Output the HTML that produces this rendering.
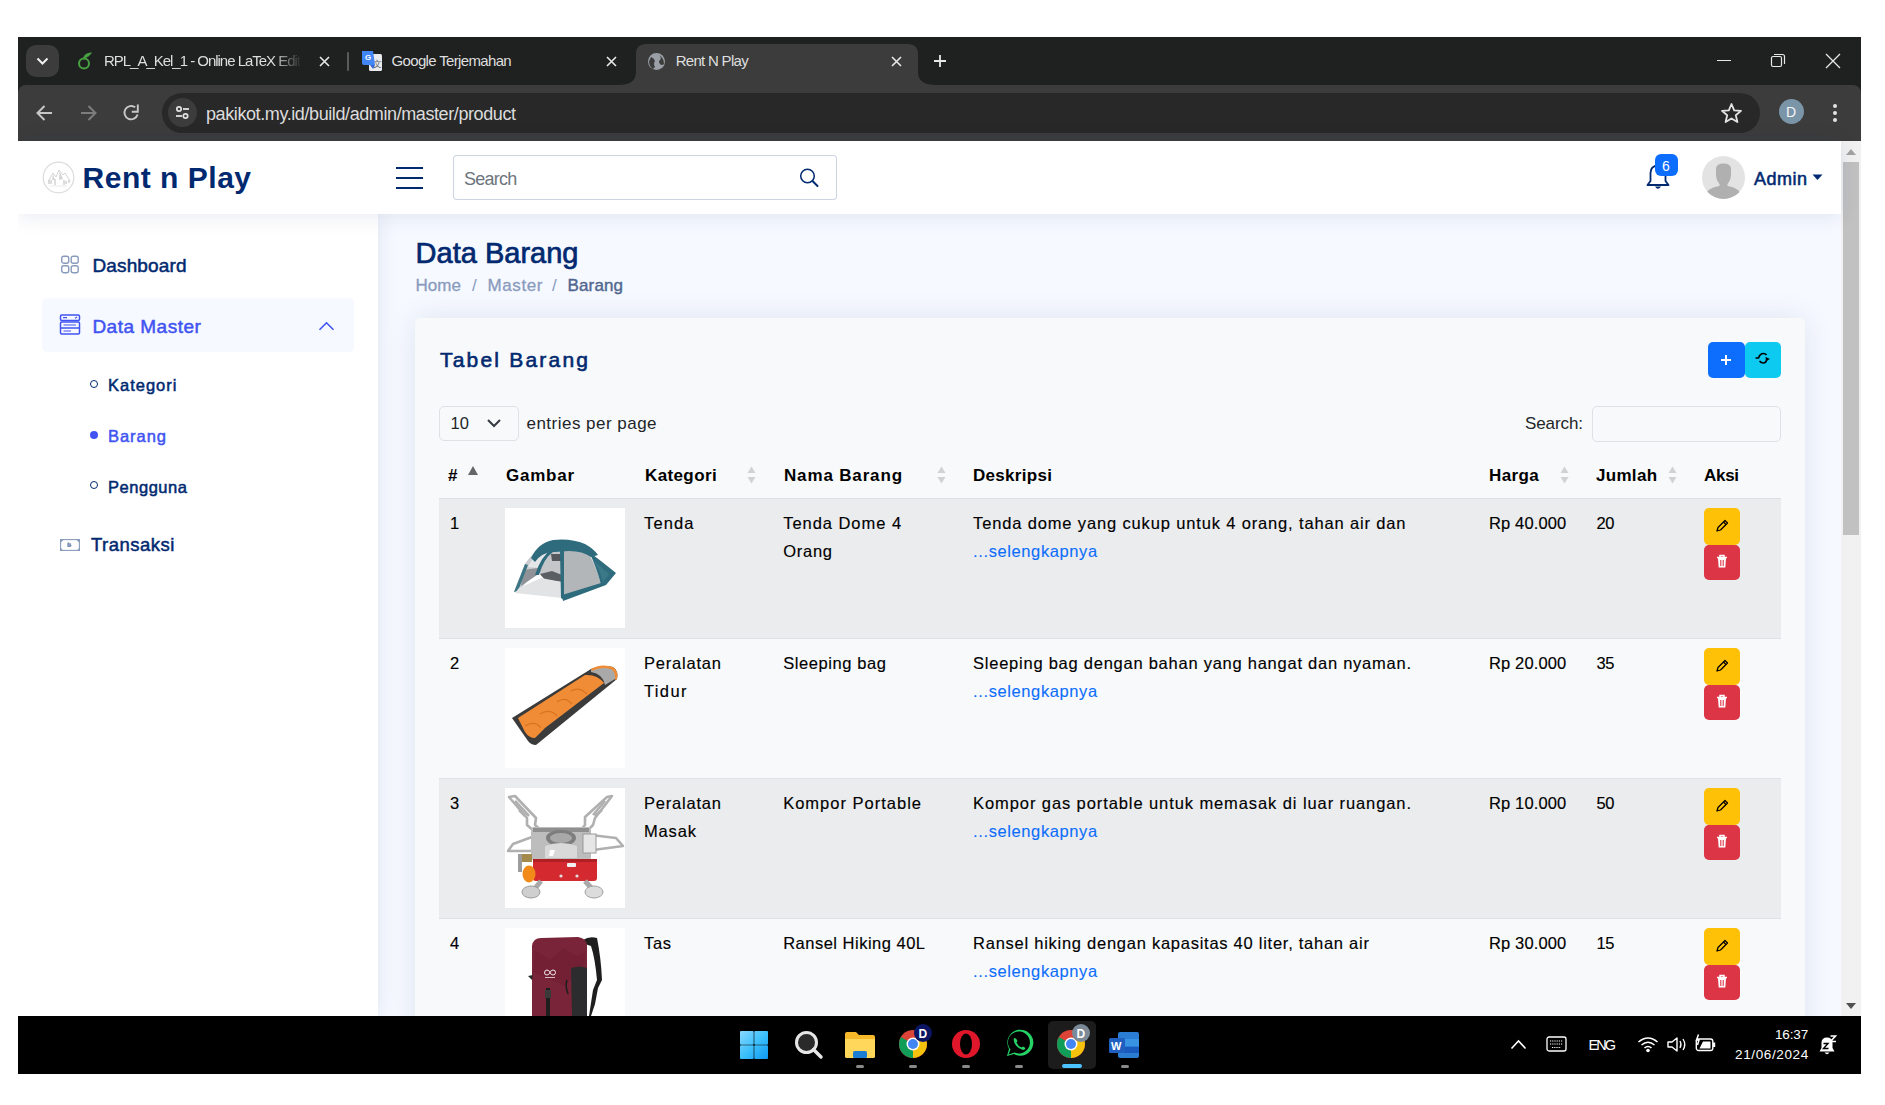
<!DOCTYPE html><html><head><meta charset="utf-8"><style>
html,body{margin:0;padding:0}
body{width:1885px;height:1105px;background:#fff;position:relative;overflow:hidden;font-family:"Liberation Sans",sans-serif}
.a{position:absolute}
.t{position:absolute;white-space:nowrap;line-height:1}
</style></head><body>
<div class="a" style="left:18px;top:37px;width:1843px;height:104px;background:#1f2020"></div>
<div class="a" style="left:18px;top:85px;width:1843px;height:56px;background:#3c3c3c;border-radius:8px 8px 0 0"></div>
<div class="a" style="left:26px;top:45px;width:33px;height:32px;background:#3c3c3c;border-radius:10px"></div>
<svg class="a" style="left:36px;top:57px;" width="13" height="8" viewBox="0 0 13 8"><path d="M1.5 1.5 L6.5 6.5 L11.5 1.5" stroke="#f0f0f0" stroke-width="2" fill="none"/></svg>
<svg class="a" style="left:77px;top:51px;" width="16" height="19" viewBox="0 0 16 19"><circle cx="7" cy="12.5" r="5" stroke="#47a141" stroke-width="2" fill="none"/><path d="M6 7.5 C7 3 11 1.5 15 1.5 C13 5 10 6.5 7 7.5Z" fill="#47a141"/></svg>
<div class="t " style="left:104.00px;top:53.05px;font-size:15px;font-weight:normal;color:#dedede;letter-spacing:-1.021px;width:200px;overflow:hidden;padding-bottom:5px;-webkit-mask-image:linear-gradient(90deg,#000 84%,transparent 99%);">RPL_A_Kel_1 - Online LaTeX Edit</div>
<svg class="a" style="left:318px;top:55px;" width="13" height="13" viewBox="0 0 13 13"><path d="M2 2 L11 11 M11 2 L2 11" stroke="#e8e8e8" stroke-width="1.6"/></svg>
<div class="a" style="left:347px;top:52px;width:2px;height:19px;background:#5a5a5a;border-radius:1px"></div>
<svg class="a" style="left:361px;top:50px;" width="22" height="22" viewBox="0 0 22 22"><rect x="8" y="4" width="13" height="17" rx="1.5" fill="#e8eaed"/><text x="12" y="17" font-size="9" fill="#5f6368" font-family="Liberation Sans">文</text><path d="M1 1 H12 L14 15 H3 Q1 15 1 13Z" fill="#4285f4"/><text x="4" y="10" font-size="8" fill="#fff" font-weight="bold" font-family="Liberation Sans">G</text><path d="M9 15 L14 15 L12 19Z" fill="#3367d6"/></svg>
<div class="t " style="left:391.50px;top:53.05px;font-size:15px;font-weight:normal;color:#dedede;letter-spacing:-0.653px;">Google Terjemahan</div>
<svg class="a" style="left:605px;top:55px;" width="13" height="13" viewBox="0 0 13 13"><path d="M2 2 L11 11 M11 2 L2 11" stroke="#e8e8e8" stroke-width="1.6"/></svg>
<svg class="a" style="left:618px;top:44px" width="318" height="41" viewBox="0 0 318 41"><path d="M0 41 Q18 41 18 28 V10 Q18 0 28 0 H290 Q300 0 300 10 V28 Q300 41 318 41 Z" fill="#3c3c3c"/></svg>
<svg class="a" style="left:647px;top:52px;" width="19" height="19" viewBox="0 0 19 19"><circle cx="9.5" cy="9.5" r="8.5" fill="#9aa0a6"/><path d="M4 5 Q7 6 8 9 Q6 12 8 15 L6 17 Q2 14 2 9.5Z M12 3 Q15 6 13 8 Q11 9 13 12 Q15 14 17 12 Q17 6 12 3Z" fill="#3c3c3c"/></svg>
<div class="t " style="left:675.70px;top:53.05px;font-size:15px;font-weight:normal;color:#dedede;letter-spacing:-0.703px;">Rent N Play</div>
<svg class="a" style="left:890px;top:55px;" width="13" height="13" viewBox="0 0 13 13"><path d="M2 2 L11 11 M11 2 L2 11" stroke="#e8e8e8" stroke-width="1.6"/></svg>
<svg class="a" style="left:933px;top:54px;" width="14" height="14" viewBox="0 0 14 14"><path d="M7 1 V13 M1 7 H13" stroke="#e8e8e8" stroke-width="1.8"/></svg>
<div class="a" style="left:1717px;top:60px;width:14px;height:1px;background:#e8e8e8"></div>
<svg class="a" style="left:1770px;top:53px;" width="16" height="15" viewBox="0 0 16 15"><rect x="1.5" y="3.5" width="10" height="10" rx="1.5" stroke="#e8e8e8" stroke-width="1.2" fill="none"/><path d="M4 1.5 H12.5 Q14.5 1.5 14.5 3.5 V11" stroke="#e8e8e8" stroke-width="1.2" fill="none"/></svg>
<svg class="a" style="left:1825px;top:53px;" width="16" height="16" viewBox="0 0 16 16"><path d="M1 1 L15 15 M15 1 L1 15" stroke="#e8e8e8" stroke-width="1.3"/></svg>
<svg class="a" style="left:35px;top:104px;" width="19" height="18" viewBox="0 0 19 18"><path d="M17 9 H3 M9.5 2 L2.5 9 L9.5 16" stroke="#c7c7c7" stroke-width="2" fill="none"/></svg>
<svg class="a" style="left:79px;top:104px;" width="19" height="18" viewBox="0 0 19 18"><path d="M2 9 H16 M9.5 2 L16.5 9 L9.5 16" stroke="#7d7d7d" stroke-width="2" fill="none"/></svg>
<svg class="a" style="left:122px;top:103px;" width="19" height="19" viewBox="0 0 19 19"><path d="M15.6 11.5 A6.7 6.7 0 1 1 13.2 4.3" stroke="#c7c7c7" stroke-width="1.9" fill="none"/><path d="M15.8 1.5 V8.8 H9.8" stroke="#c7c7c7" stroke-width="1.9" fill="none"/></svg>
<div class="a" style="left:162px;top:93px;width:1598px;height:40px;background:#282828;border-radius:20px"></div>
<div class="a" style="left:168px;top:98px;width:29px;height:29px;background:#3c3c3c;border-radius:50%"></div>
<svg class="a" style="left:173px;top:103px;" width="19" height="19" viewBox="0 0 19 19"><circle cx="6" cy="6" r="2.2" stroke="#e3e3e3" stroke-width="1.7" fill="none"/><path d="M10 6 H16" stroke="#e3e3e3" stroke-width="1.8"/><circle cx="12.5" cy="13" r="2.2" stroke="#e3e3e3" stroke-width="1.7" fill="none"/><path d="M3 13 H9" stroke="#e3e3e3" stroke-width="1.8"/></svg>
<div class="t " style="left:206.00px;top:105.20px;font-size:18px;font-weight:normal;color:#dcdcdc;letter-spacing:-0.405px;">pakikot.my.id/build/admin/master/product</div>
<svg class="a" style="left:1720px;top:102px;" width="23" height="22" viewBox="0 0 23 22"><path d="M11.5 2 L14.2 8.4 L21 8.9 L15.8 13.3 L17.4 20 L11.5 16.4 L5.6 20 L7.2 13.3 L2 8.9 L8.8 8.4Z" stroke="#e3e3e3" stroke-width="1.8" fill="none" stroke-linejoin="round"/></svg>
<div class="a" style="left:1779px;top:99px;width:25px;height:25px;background:#7b95a8;border-radius:50%"></div>
<div class="t " style="left:1786.00px;top:105.10px;font-size:14px;font-weight:normal;color:#f4f6f8;letter-spacing:0.000px;">D</div>
<div class="a" style="left:1833px;top:104px;width:4px;height:4px;background:#e3e3e3;border-radius:50%"></div>
<div class="a" style="left:1833px;top:111px;width:4px;height:4px;background:#e3e3e3;border-radius:50%"></div>
<div class="a" style="left:1833px;top:118px;width:4px;height:4px;background:#e3e3e3;border-radius:50%"></div>
<div class="a" style="left:18px;top:141px;width:1823px;height:875px;background:#f6f9ff"></div>
<div class="a" style="left:1841px;top:141px;width:20px;height:875px;background:#f1f1f1"></div>
<div class="a" style="left:1843px;top:162px;width:16px;height:373px;background:#c1c1c1"></div>
<svg class="a" style="left:1846px;top:149px;" width="10" height="6" viewBox="0 0 10 6"><path d="M0 6 L5 0 L10 6Z" fill="#a3a3a3"/></svg>
<svg class="a" style="left:1846px;top:1003px;" width="10" height="6" viewBox="0 0 10 6"><path d="M0 0 L5 6 L10 0Z" fill="#505050"/></svg>
<div class="a" style="left:18px;top:214px;width:360px;height:802px;background:#fff;box-shadow:0 0 20px rgba(1,41,112,0.1)"></div>
<div class="a" style="left:18px;top:141px;width:1823px;height:73px;background:#fff;box-shadow:0 2px 20px rgba(1,41,112,0.1)"></div>
<svg class="a" style="left:42px;top:161px;" width="33" height="33" viewBox="0 0 33 33"><circle cx="16.5" cy="16.5" r="15.3" fill="#fff" stroke="#dcdcdc" stroke-width="1.2"/><path d="M6 21 L11 12 L14 16 L17 9 L21 14 L23 12 L28 20" stroke="#d4d4d4" stroke-width="1" fill="none"/><path d="M11 13 L13 19 L10 19Z M17.5 10 L21 18 L17 19Z" fill="#d6d6d6"/><path d="M7 19 V23 M9 19 V23 M13 18 V24 M22 19 V24 M24 20 V23 M27 19 V22" stroke="#d0d0d0" stroke-width="1.4"/><path d="M8 25 H25" stroke="#e4e4e4" stroke-width="0.8"/></svg>
<div class="t " style="left:82.50px;top:162.50px;font-size:30px;font-weight:bold;color:#012970;letter-spacing:0.515px;">Rent n Play</div>
<div class="a" style="left:396px;top:167px;width:27px;height:2px;background:#012970"></div>
<div class="a" style="left:396px;top:177px;width:27px;height:2px;background:#012970"></div>
<div class="a" style="left:396px;top:187px;width:27px;height:2px;background:#012970"></div>
<div class="a" style="left:453px;top:155px;width:384px;height:45px;border:1px solid rgba(1,41,112,0.2);border-radius:4px;box-sizing:border-box;background:#fff"></div>
<div class="t " style="left:464.00px;top:169.70px;font-size:18px;font-weight:normal;color:#6c757d;letter-spacing:-0.732px;">Search</div>
<svg class="a" style="left:797px;top:165px;" width="24" height="24" viewBox="0 0 24 24"><circle cx="10.5" cy="11" r="6.8" stroke="#012970" stroke-width="1.5" fill="none"/><path d="M15.5 16 L20.5 21" stroke="#012970" stroke-width="2" stroke-linecap="round"/></svg>
<svg class="a" style="left:1643px;top:160px;" width="30" height="32" viewBox="0 0 30 32"><path d="M4.5 25 H25.5 L22.5 21 V13 Q22.5 6 15 5.5 Q7.5 6 7.5 13 V21 Z" stroke="#012970" stroke-width="1.8" fill="none" stroke-linejoin="round"/><path d="M12 26.5 Q15 31 18 26.5Z" fill="#012970"/></svg>
<div class="a" style="left:1655px;top:154px;width:23px;height:22px;background:#0d6efd;border-radius:6px"></div>
<div class="t " style="left:1662.00px;top:159.10px;font-size:14px;font-weight:normal;color:#fff;letter-spacing:0.000px;">6</div>
<svg class="a" style="left:1702px;top:156px;" width="43" height="43" viewBox="0 0 43 43"><defs><clipPath id="av"><circle cx="21.5" cy="21.5" r="21.5"/></clipPath></defs><circle cx="21.5" cy="21.5" r="21.5" fill="#e3e3e3"/><g clip-path="url(#av)" fill="#b0b0b0"><path d="M14 13 Q14 7.5 21.5 7.5 Q29 7.5 29 13 L29 19 Q28.5 25 25.5 28 L25.5 30 Q33 31 37 35 L40 44 H3 L5.5 35 Q10 31 17.5 30 L17.5 28 Q14.5 25 14 19Z"/></g></svg>
<div class="t " style="left:1754.00px;top:169.70px;font-size:18px;font-weight:normal;color:#012970;letter-spacing:0.492px;-webkit-text-stroke:0.55px #012970;">Admin</div>
<svg class="a" style="left:1812px;top:174px;" width="11" height="7" viewBox="0 0 11 7"><path d="M0.5 0.5 L10.5 0.5 L5.5 6Z" fill="#012970"/></svg>
<svg class="a" style="left:60px;top:255px;" width="20" height="19" viewBox="0 0 20 19"><g stroke="#899bbd" stroke-width="1.4" fill="none"><rect x="1.7" y="1.2" width="7" height="7" rx="2"/><rect x="11.2" y="1.2" width="7" height="7" rx="2"/><rect x="1.7" y="10.7" width="7" height="7" rx="2"/><rect x="11.2" y="10.7" width="7" height="7" rx="2"/></g></svg>
<div class="t " style="left:92.40px;top:255.85px;font-size:19px;font-weight:normal;color:#012970;letter-spacing:0.149px;-webkit-text-stroke:0.5px #012970;">Dashboard</div>
<div class="a" style="left:42px;top:298px;width:312px;height:54px;background:#f6f9ff;border-radius:5px"></div>
<svg class="a" style="left:59px;top:314px;" width="22" height="21" viewBox="0 0 22 21"><g stroke="#4154f1" stroke-width="1.5" fill="none"><rect x="1.5" y="1" width="19" height="5.5" rx="1.2"/><rect x="1.5" y="8" width="19" height="12" rx="1.2"/><path d="M1.5 14 H20.5"/></g><path d="M4 3.6 H8 M16 4.2 L18 3 M4.5 11 H17 M4.5 17 H12" stroke="#4154f1" stroke-width="1.2"/></svg>
<div class="t " style="left:92.40px;top:316.85px;font-size:19px;font-weight:normal;color:#4154f1;letter-spacing:0.494px;-webkit-text-stroke:0.5px #4154f1;">Data Master</div>
<svg class="a" style="left:317px;top:319px;" width="19" height="13" viewBox="0 0 19 13"><path d="M2.5 10.8 L9.5 3.8 L16.5 10.8" stroke="#4154f1" stroke-width="1.6" fill="none"/></svg>
<div class="a" style="left:90px;top:380px;width:8px;height:8px;border:1px solid #012970;border-radius:50%;box-sizing:border-box"></div>
<div class="t " style="left:108.00px;top:376.98px;font-size:16.5px;font-weight:normal;color:#012970;letter-spacing:0.991px;-webkit-text-stroke:0.5px #012970;">Kategori</div>
<div class="a" style="left:90px;top:431px;width:8px;height:8px;background:#4154f1;border-radius:50%"></div>
<div class="t " style="left:108.00px;top:427.98px;font-size:16.5px;font-weight:normal;color:#4154f1;letter-spacing:0.958px;-webkit-text-stroke:0.5px #4154f1;">Barang</div>
<div class="a" style="left:90px;top:481px;width:8px;height:8px;border:1px solid #012970;border-radius:50%;box-sizing:border-box"></div>
<div class="t " style="left:108.00px;top:478.68px;font-size:16.5px;font-weight:normal;color:#012970;letter-spacing:0.525px;-webkit-text-stroke:0.5px #012970;">Pengguna</div>
<svg class="a" style="left:59px;top:538px;" width="22" height="14" viewBox="0 0 22 14"><rect x="1.6" y="1.6" width="18.8" height="10.8" stroke="#899bbd" stroke-width="1.1" fill="none"/><path d="M1 1 H5 L2.5 4 H1Z M21 1 H17 L19.5 4 H21Z M1 13 V9 L4.5 13Z M21 13 V9 L17.5 13Z" fill="#899bbd"/><path d="M8.2 5.3 L9.5 4 L10.5 5.2 H12 V6.8 L13 7.5 L12 8.2 V9 H8.2Z" fill="#899bbd"/></svg>
<div class="t " style="left:91.00px;top:535.88px;font-size:18.5px;font-weight:normal;color:#012970;letter-spacing:0.494px;-webkit-text-stroke:0.5px #012970;">Transaksi</div>
<div class="t " style="left:415.60px;top:239.35px;font-size:29px;font-weight:normal;color:#012970;letter-spacing:0.006px;-webkit-text-stroke:0.7px #012970;">Data Barang</div>
<div class="t " style="left:415.60px;top:276.85px;font-size:17px;font-weight:normal;color:#899bbd;letter-spacing:0.003px;-webkit-text-stroke:0.3px #899bbd;">Home</div>
<div class="t " style="left:472.00px;top:276.85px;font-size:17px;font-weight:normal;color:#899bbd;letter-spacing:0.000px;">/</div>
<div class="t " style="left:487.50px;top:276.85px;font-size:17px;font-weight:normal;color:#899bbd;letter-spacing:0.613px;-webkit-text-stroke:0.3px #899bbd;">Master</div>
<div class="t " style="left:552.00px;top:276.85px;font-size:17px;font-weight:normal;color:#899bbd;letter-spacing:0.000px;">/</div>
<div class="t " style="left:567.60px;top:276.85px;font-size:17px;font-weight:normal;color:#51678f;letter-spacing:0.115px;-webkit-text-stroke:0.4px #51678f;">Barang</div>
<div class="a" style="left:415px;top:318px;width:1390px;height:882px;background:#f8f9fa;border-radius:5px;box-shadow:0 0 30px rgba(1,41,112,0.1)"></div>
<div class="t " style="left:440.00px;top:348.95px;font-size:21px;font-weight:normal;color:#012970;letter-spacing:2.200px;-webkit-text-stroke:0.6px #012970;">Tabel Barang</div>
<div class="a" style="left:1708px;top:342px;width:37px;height:36px;background:#0d6efd;border-radius:5px"></div>
<div class="a" style="left:1745px;top:342px;width:36px;height:36px;background:#0dcaf0;border-radius:5px"></div>
<svg class="a" style="left:1719px;top:353px;" width="14" height="14" viewBox="0 0 14 14"><path d="M7 2 V12 M2 7 H12" stroke="#fff" stroke-width="2"/></svg>
<svg class="a" style="left:1755px;top:351px;" width="16" height="14" viewBox="0 0 16 14"><path d="M0.5 7 H3.5 Q5 2.5 8.5 2.5 Q10.5 2.5 11.5 4" stroke="#000" stroke-width="1.7" fill="none"/><path d="M4.5 10 Q6 12 8.5 12 Q11 12 12 8" stroke="#000" stroke-width="1.7" fill="none"/><path d="M10.5 6 L15 8 L11 10Z" fill="#000"/></svg>
<div class="a" style="left:439px;top:406px;width:80px;height:35px;border:1px solid #dee2e6;border-radius:5px;box-sizing:border-box"></div>
<div class="t " style="left:450.60px;top:414.98px;font-size:16.5px;font-weight:normal;color:#212529;letter-spacing:0.000px;">10</div>
<svg class="a" style="left:486px;top:418px;" width="16" height="11" viewBox="0 0 16 11"><path d="M2 2 L8 8 L14 2" stroke="#343a40" stroke-width="2" fill="none"/></svg>
<div class="t " style="left:526.50px;top:414.55px;font-size:17px;font-weight:normal;color:#212529;letter-spacing:0.478px;">entries per page</div>
<div class="t " style="left:1525.00px;top:414.55px;font-size:17px;font-weight:normal;color:#212529;letter-spacing:-0.094px;">Search:</div>
<div class="a" style="left:1592px;top:406px;width:189px;height:36px;border:1px solid #dee2e6;border-radius:5px;box-sizing:border-box"></div>
<div class="t " style="left:448.00px;top:466.95px;font-size:17px;font-weight:bold;color:#000;letter-spacing:0.000px;">#</div>
<svg class="a" style="left:468px;top:466px;" width="10" height="9" viewBox="0 0 10 9"><path d="M0 9 L5 0 L10 9Z" fill="#666"/></svg>
<div class="t " style="left:505.90px;top:466.95px;font-size:17px;font-weight:bold;color:#000;letter-spacing:0.808px;">Gambar</div>
<div class="t " style="left:645.00px;top:466.95px;font-size:17px;font-weight:bold;color:#000;letter-spacing:0.381px;">Kategori</div>
<svg class="a" style="left:747px;top:466px;" width="9" height="18" viewBox="0 0 9 18"><path d="M0.5 7 L4.5 0.5 L8.5 7Z" fill="#d2d2d2"/><path d="M0.5 11 L4.5 17.5 L8.5 11Z" fill="#d2d2d2"/></svg>
<div class="t " style="left:784.00px;top:466.95px;font-size:17px;font-weight:bold;color:#000;letter-spacing:0.844px;">Nama Barang</div>
<svg class="a" style="left:937px;top:466px;" width="9" height="18" viewBox="0 0 9 18"><path d="M0.5 7 L4.5 0.5 L8.5 7Z" fill="#d2d2d2"/><path d="M0.5 11 L4.5 17.5 L8.5 11Z" fill="#d2d2d2"/></svg>
<div class="t " style="left:973.00px;top:466.95px;font-size:17px;font-weight:bold;color:#000;letter-spacing:0.302px;">Deskripsi</div>
<div class="t " style="left:1489.00px;top:466.95px;font-size:17px;font-weight:bold;color:#000;letter-spacing:0.409px;">Harga</div>
<svg class="a" style="left:1560px;top:466px;" width="9" height="18" viewBox="0 0 9 18"><path d="M0.5 7 L4.5 0.5 L8.5 7Z" fill="#d2d2d2"/><path d="M0.5 11 L4.5 17.5 L8.5 11Z" fill="#d2d2d2"/></svg>
<div class="t " style="left:1596.00px;top:466.95px;font-size:17px;font-weight:bold;color:#000;letter-spacing:0.300px;">Jumlah</div>
<svg class="a" style="left:1668px;top:466px;" width="9" height="18" viewBox="0 0 9 18"><path d="M0.5 7 L4.5 0.5 L8.5 7Z" fill="#d2d2d2"/><path d="M0.5 11 L4.5 17.5 L8.5 11Z" fill="#d2d2d2"/></svg>
<div class="t " style="left:1704.00px;top:466.95px;font-size:17px;font-weight:bold;color:#000;letter-spacing:-0.290px;">Aksi</div>
<div class="a" style="left:439px;top:498px;width:1342px;height:1px;background:#dde0e3"></div>
<div class="a" style="left:439px;top:499px;width:1342px;height:139px;background:rgba(0,0,0,0.05)"></div>
<div class="t " style="left:450.00px;top:514.77px;font-size:16.5px;font-weight:normal;color:#000;letter-spacing:0.000px;-webkit-text-stroke:0.15px #000;">1</div>
<div class="a" style="left:505px;top:508px;width:120px;height:120px;background:#fff"></div>
<div class="t " style="left:644.00px;top:514.77px;font-size:16.5px;font-weight:normal;color:#000;letter-spacing:1.139px;-webkit-text-stroke:0.15px #000;">Tenda</div>
<div class="t " style="left:783.20px;top:514.77px;font-size:16.5px;font-weight:normal;color:#000;letter-spacing:0.961px;-webkit-text-stroke:0.15px #000;">Tenda Dome 4</div>
<div class="t " style="left:783.20px;top:542.77px;font-size:16.5px;font-weight:normal;color:#000;letter-spacing:0.732px;-webkit-text-stroke:0.15px #000;">Orang</div>
<div class="t " style="left:973.10px;top:514.77px;font-size:16.5px;font-weight:normal;color:#000;letter-spacing:0.849px;-webkit-text-stroke:0.15px #000;">Tenda dome yang cukup untuk 4 orang, tahan air dan</div>
<div class="t " style="left:973.10px;top:542.77px;font-size:16.5px;font-weight:normal;color:#0d6efd;letter-spacing:0.603px;-webkit-text-stroke:0.1px #0d6efd;">...selengkapnya</div>
<div class="t " style="left:1489.00px;top:514.77px;font-size:16.5px;font-weight:normal;color:#000;letter-spacing:0.144px;-webkit-text-stroke:0.15px #000;">Rp 40.000</div>
<div class="t " style="left:1596.40px;top:514.77px;font-size:16.5px;font-weight:normal;color:#000;letter-spacing:-0.215px;-webkit-text-stroke:0.15px #000;">20</div>
<div class="a" style="left:1704px;top:508px;width:36px;height:37px;background:#ffc107;border-radius:5px"></div>
<div class="a" style="left:1704px;top:545px;width:36px;height:35px;background:#dc3545;border-radius:5px"></div>
<svg class="a" style="left:1715px;top:519px;" width="14" height="14" viewBox="0 0 14 14"><path d="M2 12 L3 8.5 L10 1.5 L12.5 4 L5.5 11Z" stroke="#000" stroke-width="1.3" fill="none" stroke-linejoin="round"/><path d="M8.5 3 L11 5.5" stroke="#000" stroke-width="1.2"/></svg>
<svg class="a" style="left:1715px;top:554px;" width="14" height="15" viewBox="0 0 14 15"><path d="M2 3.5 H12 M5 3.5 V1.5 H9 V3.5" stroke="#fff" stroke-width="1.5" fill="none"/><path d="M3 4 H11 L10.3 13.5 H3.7Z" fill="#fff"/><path d="M5.8 6 V12 M8.2 6 V12" stroke="#dc3545" stroke-width="1.1"/></svg>
<div class="a" style="left:439px;top:639px;width:1342px;height:139px;background:transparent"></div>
<div class="a" style="left:439px;top:638px;width:1342px;height:1px;background:#dee2e6"></div>
<div class="t " style="left:450.00px;top:654.77px;font-size:16.5px;font-weight:normal;color:#000;letter-spacing:0.000px;-webkit-text-stroke:0.15px #000;">2</div>
<div class="a" style="left:505px;top:648px;width:120px;height:120px;background:#fff"></div>
<div class="t " style="left:644.00px;top:654.77px;font-size:16.5px;font-weight:normal;color:#000;letter-spacing:0.785px;-webkit-text-stroke:0.15px #000;">Peralatan</div>
<div class="t " style="left:644.00px;top:682.77px;font-size:16.5px;font-weight:normal;color:#000;letter-spacing:1.360px;-webkit-text-stroke:0.15px #000;">Tidur</div>
<div class="t " style="left:783.20px;top:654.77px;font-size:16.5px;font-weight:normal;color:#000;letter-spacing:0.585px;-webkit-text-stroke:0.15px #000;">Sleeping bag</div>
<div class="t " style="left:973.10px;top:654.77px;font-size:16.5px;font-weight:normal;color:#000;letter-spacing:0.751px;-webkit-text-stroke:0.15px #000;">Sleeping bag dengan bahan yang hangat dan nyaman.</div>
<div class="t " style="left:973.10px;top:682.77px;font-size:16.5px;font-weight:normal;color:#0d6efd;letter-spacing:0.603px;-webkit-text-stroke:0.1px #0d6efd;">...selengkapnya</div>
<div class="t " style="left:1489.00px;top:654.77px;font-size:16.5px;font-weight:normal;color:#000;letter-spacing:0.144px;-webkit-text-stroke:0.15px #000;">Rp 20.000</div>
<div class="t " style="left:1596.40px;top:654.77px;font-size:16.5px;font-weight:normal;color:#000;letter-spacing:-0.215px;-webkit-text-stroke:0.15px #000;">35</div>
<div class="a" style="left:1704px;top:648px;width:36px;height:37px;background:#ffc107;border-radius:5px"></div>
<div class="a" style="left:1704px;top:685px;width:36px;height:35px;background:#dc3545;border-radius:5px"></div>
<svg class="a" style="left:1715px;top:659px;" width="14" height="14" viewBox="0 0 14 14"><path d="M2 12 L3 8.5 L10 1.5 L12.5 4 L5.5 11Z" stroke="#000" stroke-width="1.3" fill="none" stroke-linejoin="round"/><path d="M8.5 3 L11 5.5" stroke="#000" stroke-width="1.2"/></svg>
<svg class="a" style="left:1715px;top:694px;" width="14" height="15" viewBox="0 0 14 15"><path d="M2 3.5 H12 M5 3.5 V1.5 H9 V3.5" stroke="#fff" stroke-width="1.5" fill="none"/><path d="M3 4 H11 L10.3 13.5 H3.7Z" fill="#fff"/><path d="M5.8 6 V12 M8.2 6 V12" stroke="#dc3545" stroke-width="1.1"/></svg>
<div class="a" style="left:439px;top:779px;width:1342px;height:139px;background:rgba(0,0,0,0.05)"></div>
<div class="a" style="left:439px;top:778px;width:1342px;height:1px;background:#dee2e6"></div>
<div class="t " style="left:450.00px;top:794.77px;font-size:16.5px;font-weight:normal;color:#000;letter-spacing:0.000px;-webkit-text-stroke:0.15px #000;">3</div>
<div class="a" style="left:505px;top:788px;width:120px;height:120px;background:#fff"></div>
<div class="t " style="left:644.00px;top:794.77px;font-size:16.5px;font-weight:normal;color:#000;letter-spacing:0.785px;-webkit-text-stroke:0.15px #000;">Peralatan</div>
<div class="t " style="left:644.00px;top:822.77px;font-size:16.5px;font-weight:normal;color:#000;letter-spacing:0.831px;-webkit-text-stroke:0.15px #000;">Masak</div>
<div class="t " style="left:783.20px;top:794.77px;font-size:16.5px;font-weight:normal;color:#000;letter-spacing:0.998px;-webkit-text-stroke:0.15px #000;">Kompor Portable</div>
<div class="t " style="left:973.10px;top:794.77px;font-size:16.5px;font-weight:normal;color:#000;letter-spacing:0.907px;-webkit-text-stroke:0.15px #000;">Kompor gas portable untuk memasak di luar ruangan.</div>
<div class="t " style="left:973.10px;top:822.77px;font-size:16.5px;font-weight:normal;color:#0d6efd;letter-spacing:0.603px;-webkit-text-stroke:0.1px #0d6efd;">...selengkapnya</div>
<div class="t " style="left:1489.00px;top:794.77px;font-size:16.5px;font-weight:normal;color:#000;letter-spacing:0.144px;-webkit-text-stroke:0.15px #000;">Rp 10.000</div>
<div class="t " style="left:1596.40px;top:794.77px;font-size:16.5px;font-weight:normal;color:#000;letter-spacing:-0.215px;-webkit-text-stroke:0.15px #000;">50</div>
<div class="a" style="left:1704px;top:788px;width:36px;height:37px;background:#ffc107;border-radius:5px"></div>
<div class="a" style="left:1704px;top:825px;width:36px;height:35px;background:#dc3545;border-radius:5px"></div>
<svg class="a" style="left:1715px;top:799px;" width="14" height="14" viewBox="0 0 14 14"><path d="M2 12 L3 8.5 L10 1.5 L12.5 4 L5.5 11Z" stroke="#000" stroke-width="1.3" fill="none" stroke-linejoin="round"/><path d="M8.5 3 L11 5.5" stroke="#000" stroke-width="1.2"/></svg>
<svg class="a" style="left:1715px;top:834px;" width="14" height="15" viewBox="0 0 14 15"><path d="M2 3.5 H12 M5 3.5 V1.5 H9 V3.5" stroke="#fff" stroke-width="1.5" fill="none"/><path d="M3 4 H11 L10.3 13.5 H3.7Z" fill="#fff"/><path d="M5.8 6 V12 M8.2 6 V12" stroke="#dc3545" stroke-width="1.1"/></svg>
<div class="a" style="left:439px;top:919px;width:1342px;height:139px;background:transparent"></div>
<div class="a" style="left:439px;top:918px;width:1342px;height:1px;background:#dee2e6"></div>
<div class="t " style="left:450.00px;top:934.77px;font-size:16.5px;font-weight:normal;color:#000;letter-spacing:0.000px;-webkit-text-stroke:0.15px #000;">4</div>
<div class="a" style="left:505px;top:928px;width:120px;height:120px;background:#fff"></div>
<div class="t " style="left:644.00px;top:934.77px;font-size:16.5px;font-weight:normal;color:#000;letter-spacing:0.671px;-webkit-text-stroke:0.15px #000;">Tas</div>
<div class="t " style="left:783.20px;top:934.77px;font-size:16.5px;font-weight:normal;color:#000;letter-spacing:0.494px;-webkit-text-stroke:0.15px #000;">Ransel Hiking 40L</div>
<div class="t " style="left:973.10px;top:934.77px;font-size:16.5px;font-weight:normal;color:#000;letter-spacing:0.740px;-webkit-text-stroke:0.15px #000;">Ransel hiking dengan kapasitas 40 liter, tahan air</div>
<div class="t " style="left:973.10px;top:962.77px;font-size:16.5px;font-weight:normal;color:#0d6efd;letter-spacing:0.603px;-webkit-text-stroke:0.1px #0d6efd;">...selengkapnya</div>
<div class="t " style="left:1489.00px;top:934.77px;font-size:16.5px;font-weight:normal;color:#000;letter-spacing:0.144px;-webkit-text-stroke:0.15px #000;">Rp 30.000</div>
<div class="t " style="left:1596.40px;top:934.77px;font-size:16.5px;font-weight:normal;color:#000;letter-spacing:-0.215px;-webkit-text-stroke:0.15px #000;">15</div>
<div class="a" style="left:1704px;top:928px;width:36px;height:37px;background:#ffc107;border-radius:5px"></div>
<div class="a" style="left:1704px;top:965px;width:36px;height:35px;background:#dc3545;border-radius:5px"></div>
<svg class="a" style="left:1715px;top:939px;" width="14" height="14" viewBox="0 0 14 14"><path d="M2 12 L3 8.5 L10 1.5 L12.5 4 L5.5 11Z" stroke="#000" stroke-width="1.3" fill="none" stroke-linejoin="round"/><path d="M8.5 3 L11 5.5" stroke="#000" stroke-width="1.2"/></svg>
<svg class="a" style="left:1715px;top:974px;" width="14" height="15" viewBox="0 0 14 15"><path d="M2 3.5 H12 M5 3.5 V1.5 H9 V3.5" stroke="#fff" stroke-width="1.5" fill="none"/><path d="M3 4 H11 L10.3 13.5 H3.7Z" fill="#fff"/><path d="M5.8 6 V12 M8.2 6 V12" stroke="#dc3545" stroke-width="1.1"/></svg>
<svg class="a" style="left:505px;top:508px;" width="120" height="120" viewBox="0 0 120 120"><path d="M9 84 L20 56 Q26 46 36 41 L46 41 L33 62 L18 78 Z" fill="#c9cbce"/>
<path d="M25 55 Q31 45 40 42 L44 42 L36 55 L34 60 L23 59Z" fill="#e4e6e8"/>
<path d="M18 62 L33 60 L32 67 L16 78Z" fill="#8f9397"/>
<path d="M9 84 L20 56 L23 57 L13 83Z" fill="#3d7585"/>
<path d="M33 60 L45 44 L57 44 L57 74 L36 68Z" fill="#c4c6c9"/>
<path d="M46 46 L56 46 L56 53 L47 53Z" fill="#55595d"/>
<path d="M35 66 L47 63 L57 67 L57 74 L40 72Z" fill="#5b5f63"/>
<path d="M14 80 L36 70 L57 74 L57 90 L10 85Z" fill="#e1e3e5"/>
<path d="M30 67 Q36 48 47 41 L62 40 L60 43 L48 44 Q39 50 34 67Z" fill="#2d6b7d"/>
<path d="M58 43 Q74 38 84 46 Q92 60 96 77 L58 90Z" fill="#b3b6b9"/>
<path d="M84 44 Q95 52 111 65 L101 77 L96 77 Q92 60 84 44Z" fill="#2f6c7e"/>
<path d="M88 52 L104 66 L98 74 Q95 62 88 52Z" fill="#3b7888"/>
<path d="M57 87 L96 75 L101 77 L58 93Z" fill="#2d6b7d"/>
<path d="M55 43 L59 43 L59 92 L56 90Z" fill="#2d6b7d"/>
<path d="M26 50 Q33 35 48 32 Q66 30 80 36 Q89 41 93 47 L86 49 Q78 43 64 43 L47 44 Q36 45 30 54Z" fill="#2d6b7d"/></svg>
<svg class="a" style="left:505px;top:648px;" width="120" height="120" viewBox="0 0 120 120"><path d="M7 70 L86 21 Q96 16 108 19 Q114 23 112 31 L31 97 Q26 97 23 93 Z" fill="#3b3b3b"/>
<path d="M13 70 L80 27 Q92 26 99 35 L40 80 L30 90 Q24 90 20 84Z" fill="#f08c35"/>
<path d="M20 78 Q30 72 36 80 M35 66 Q45 60 52 68 M52 54 Q60 48 67 56 M66 43 Q74 38 82 46" stroke="#d9731f" stroke-width="1.2" fill="none"/>
<path d="M86 22 Q97 17 107 21 Q112 25 110 31 L100 37 Q98 26 86 24Z" fill="#a9a9a9"/>
<path d="M86 21 Q96 15 108 19 Q114 23 112 31 L110 32 Q111 24 106 21 Q96 18 87 23Z" fill="#f08c35"/></svg>
<svg class="a" style="left:505px;top:788px;" width="120" height="120" viewBox="0 0 120 120"><g fill="none" stroke="#b0b0b0" stroke-width="2.6" stroke-linejoin="round">
<path d="M4 9 L10 8 L31 30 L30 37 L37 43 L37 52 L31 52 L30 44 L22 37 L22 30 Z"/>
<path d="M10 13 L24 28 M14 22 L20 28"/>
<path d="M107 8 L102 9 L80 29 L80 37 L74 44 L74 53 L80 52 L81 44 L88 37 L90 30Z"/>
<path d="M100 13 L88 27 M97 22 L90 28"/>
<path d="M3 63 L8 56 L27 49 L31 58 L26 63 Z"/>
<path d="M118 58 L111 50 L86 47 L82 56 L88 62 Z"/>
</g>
<rect x="26" y="39" width="60" height="33" rx="2" fill="#bdbdbd"/>
<rect x="28" y="40" width="56" height="4" fill="#8f8f8f"/>
<ellipse cx="56" cy="50" rx="15" ry="8" fill="#7d7d7d"/>
<ellipse cx="56" cy="50" rx="11" ry="5" fill="#a8a8a8"/>
<path d="M40 58 Q56 52 72 58 L72 70 L40 70Z" fill="#d9d9d9"/>
<path d="M45 62 L50 62 L48 68 L44 68Z" fill="#fff"/>
<rect x="78" y="46" width="13" height="19" fill="#e6e6e6" stroke="#9a9a9a" stroke-width="1"/>
<rect x="28" y="71" width="64" height="22" rx="3" fill="#d42a2f"/>
<rect x="28" y="71" width="64" height="3" fill="#b01f24"/>
<rect x="62" y="75" width="9" height="4" rx="1" fill="#f0f0f0"/>
<circle cx="56" cy="88" r="1.6" fill="#e0e0e0"/><circle cx="72" cy="88" r="1.6" fill="#e0e0e0"/>
<path d="M17 66 L27 66 L27 74 L17 74Z" fill="#a48a4a"/>
<path d="M13 66 L17 66 L17 84 L13 84Z" fill="#9c9c9c"/>
<ellipse cx="24" cy="86" rx="6.5" ry="8.5" fill="#f28a1a"/>
<path d="M36 93 L28 103 M80 93 L89 103" stroke="#a9a9a9" stroke-width="5"/>
<ellipse cx="26" cy="104" rx="9" ry="6" fill="#cfcfcf" stroke="#9a9a9a" stroke-width="1"/><ellipse cx="89" cy="104" rx="9" ry="6" fill="#dcdcdc" stroke="#a0a0a0" stroke-width="1"/></svg>
<svg class="a" style="left:505px;top:928px;" width="120" height="88" viewBox="0 0 120 88"><path d="M78 12 Q84 8 92 10 Q96 30 97 52 L93 60 L90 76 L86 88 L84 88 L88 62 L92 52 Q90 30 86 18 L80 16Z" fill="#1e1e1e"/>
<path d="M27 18 Q28 10 36 10 L73 9 Q81 10 82 17 L82 88 L27 88Z" fill="#7a2439"/>
<path d="M30 22 L45 32 L58 20 L72 28 L80 24 L80 36 L60 58 L28 44Z" fill="#6e1d32" opacity="0.55"/>
<path d="M66 40 Q75 37 82 40 L82 88 L67 88Z" fill="#2c2c2e"/>
<path d="M62 52 Q60 58 63 66" stroke="#1e1e1e" stroke-width="1.5" fill="none"/>
<rect x="41" y="60" width="4" height="28" fill="#1e1e1e"/>
<rect x="40" y="62" width="6" height="8" fill="#3a3a3a"/>
<path d="M39.5 45 Q39.5 42 42 42 Q44 42 45 44.5 Q46 47 48 47 Q50.5 47 50.5 44.5 Q50.5 42 48 42 Q46 42 45 44.5 Q44 47 42 47 Q39.5 47 39.5 45Z" stroke="#fff" stroke-width="0.9" fill="none"/>
<path d="M40 49.5 H50" stroke="#fff" stroke-width="0.7"/>
<path d="M23 48 L28 47 L27 52Z" fill="#2a2a2a"/></svg>
<div class="a" style="left:18px;top:1016px;width:1843px;height:58px;background:#000"></div>
<svg class="a" style="left:739px;top:1030px;" width="30" height="30" viewBox="0 0 30 30"><defs><linearGradient id="wg" gradientUnits="userSpaceOnUse" x1="0" y1="0" x2="30" y2="30"><stop offset="0" stop-color="#8fd8ff"/><stop offset="0.5" stop-color="#3ec0fb"/><stop offset="1" stop-color="#0a96f0"/></linearGradient></defs><g fill="url(#wg)"><rect x="1" y="1" width="13.7" height="13.7" rx="1"/><rect x="15.3" y="1" width="13.7" height="13.7" rx="1"/><rect x="1" y="15.3" width="13.7" height="13.7" rx="1"/><rect x="15.3" y="15.3" width="13.7" height="13.7" rx="1"/></g></svg>
<svg class="a" style="left:794px;top:1030px;" width="30" height="30" viewBox="0 0 30 30"><circle cx="12.5" cy="12.5" r="10" stroke="#e6e6e6" stroke-width="3" fill="#2a2a2a"/><path d="M19.5 19.5 L27 27" stroke="#e6e6e6" stroke-width="3.5" stroke-linecap="round"/></svg>
<svg class="a" style="left:844px;top:1030px;" width="32" height="30" viewBox="0 0 32 30"><path d="M1 4 Q1 2 3 2 L12 2 L15 5 L29 5 Q31 5 31 7 L31 26 Q31 28 29 28 L3 28 Q1 28 1 26Z" fill="#f5b92a"/><path d="M1 9 L31 9 L31 26 Q31 28 29 28 L3 28 Q1 28 1 26Z" fill="#ffd75a"/><rect x="9" y="21" width="14" height="7" rx="1.5" fill="#1a7fd4"/></svg>
<div class="a" style="left:1048px;top:1021px;width:48px;height:48px;background:#1c1c1c;border-radius:5px"></div>
<svg class="a" style="left:898px;top:1028px;" width="32" height="32" viewBox="0 0 32 32"><circle cx="15" cy="16" r="14" fill="#db4437"/><path d="M15 16 L27.1 9 A14 14 0 0 1 15 30Z" fill="#f4c20d"/><path d="M15 16 L15 30 A14 14 0 0 1 2.9 9Z" fill="#0f9d58"/><circle cx="15" cy="16" r="6.5" fill="#fff"/><circle cx="15" cy="16" r="5" fill="#4285f4"/></svg>
<svg class="a" style="left:913px;top:1023px;" width="20" height="20" viewBox="0 0 20 20"><circle cx="10" cy="10" r="9" fill="#0b1561"/><text x="5.5" y="14.5" font-size="12" font-weight="bold" fill="#fff" font-family="Liberation Sans">D</text></svg>
<svg class="a" style="left:951px;top:1029px;" width="30" height="30" viewBox="0 0 30 30"><ellipse cx="15" cy="15" rx="14" ry="14" fill="#e0162b"/><ellipse cx="15" cy="15" rx="6" ry="10.5" fill="#000"/></svg>
<svg class="a" style="left:1003px;top:1028px;" width="32" height="32" viewBox="0 0 32 32"><path d="M4 28 L6 21 A13 13 0 1 1 11 26Z" fill="#25d366"/><path d="M5.5 26.5 L7.5 21.5 A11 11 0 1 1 11.5 24.5Z" fill="#000"/><path d="M11 10 Q10 12 12 16 Q15 21 20 22 Q22 22 22.5 20 L20 18.5 L18.5 19.5 Q15 18 13.5 14.5 L14.5 13 L13 10.5Z" fill="#25d366"/></svg>
<svg class="a" style="left:1056px;top:1028px;" width="32" height="32" viewBox="0 0 32 32"><circle cx="15" cy="16" r="14" fill="#db4437"/><path d="M15 16 L27.1 9 A14 14 0 0 1 15 30Z" fill="#f4c20d"/><path d="M15 16 L15 30 A14 14 0 0 1 2.9 9Z" fill="#0f9d58"/><circle cx="15" cy="16" r="6.5" fill="#fff"/><circle cx="15" cy="16" r="5" fill="#4285f4"/></svg>
<svg class="a" style="left:1071px;top:1023px;" width="20" height="20" viewBox="0 0 20 20"><circle cx="10" cy="10" r="9" fill="#7b8a96"/><text x="5.5" y="14.5" font-size="12" font-weight="bold" fill="#fff" font-family="Liberation Sans">D</text></svg>
<svg class="a" style="left:1108px;top:1030px;" width="32" height="30" viewBox="0 0 32 30"><rect x="10" y="2" width="21" height="26" rx="2" fill="#2b7cd3"/><rect x="10" y="9" width="21" height="7" fill="#41a5ee" opacity="0.6"/><rect x="10" y="17" width="21" height="6" fill="#185abd"/><rect x="1" y="8" width="16" height="15" rx="1.5" fill="#1f5fbf"/><text x="3" y="20" font-size="11" font-weight="bold" fill="#fff" font-family="Liberation Sans">W</text></svg>
<div class="a" style="left:856px;top:1065px;width:8px;height:3px;background:#8a8a8a;border-radius:2px"></div>
<div class="a" style="left:909px;top:1065px;width:8px;height:3px;background:#8a8a8a;border-radius:2px"></div>
<div class="a" style="left:962px;top:1065px;width:8px;height:3px;background:#8a8a8a;border-radius:2px"></div>
<div class="a" style="left:1015px;top:1065px;width:8px;height:3px;background:#8a8a8a;border-radius:2px"></div>
<div class="a" style="left:1121px;top:1065px;width:8px;height:3px;background:#8a8a8a;border-radius:2px"></div>
<div class="a" style="left:1062px;top:1064px;width:20px;height:4px;background:#4cc2ff;border-radius:2px"></div>
<svg class="a" style="left:1510px;top:1039px;" width="17" height="11" viewBox="0 0 17 11"><path d="M1.5 9.5 L8.5 2 L15.5 9.5" stroke="#fff" stroke-width="1.6" fill="none"/></svg>
<svg class="a" style="left:1546px;top:1036px;" width="21" height="16" viewBox="0 0 21 16"><rect x="1" y="1" width="19" height="14" rx="2" stroke="#fff" stroke-width="1.3" fill="none"/><path d="M4 5 H17 M4 8 H17 M6 11.5 H15" stroke="#fff" stroke-width="1.1" stroke-dasharray="1.2 1"/></svg>
<div class="t " style="left:1588.50px;top:1038.38px;font-size:14.5px;font-weight:normal;color:#fff;letter-spacing:-1.946px;">ENG</div>
<svg class="a" style="left:1637px;top:1036px;" width="22" height="17" viewBox="0 0 22 17"><path d="M1.5 6 Q11 -2 20.5 6 M4.5 9 Q11 3.5 17.5 9 M7.5 12 Q11 9 14.5 12" stroke="#fff" stroke-width="1.6" fill="none"/><circle cx="11" cy="14.5" r="1.8" fill="#fff"/></svg>
<svg class="a" style="left:1666px;top:1036px;" width="22" height="17" viewBox="0 0 22 17"><path d="M2 6 H6 L11 2 V15 L6 11 H2Z" stroke="#fff" stroke-width="1.4" fill="none" stroke-linejoin="round"/><path d="M14 5 Q16 8.5 14 12 M17 3 Q20.5 8.5 17 14" stroke="#fff" stroke-width="1.3" fill="none"/></svg>
<svg class="a" style="left:1695px;top:1034px;" width="22" height="19" viewBox="0 0 22 19"><rect x="1.3" y="5" width="16.5" height="11.5" rx="2.2" stroke="#fff" stroke-width="1.4" fill="none"/><rect x="18" y="8.5" width="2.2" height="4.5" fill="#fff"/><path d="M4.5 14.5 L8 7.5 H15.5 V14.5Z" fill="#fff"/><path d="M3.5 0.5 L1.5 6 L4 6 L2.5 11" stroke="#fff" stroke-width="1.5" fill="none"/></svg>
<div class="t " style="left:1775.00px;top:1028.12px;font-size:13.5px;font-weight:normal;color:#fff;letter-spacing:-0.154px;">16:37</div>
<div class="t " style="left:1735.00px;top:1047.73px;font-size:13.5px;font-weight:normal;color:#fff;letter-spacing:0.626px;">21/06/2024</div>
<svg class="a" style="left:1818px;top:1034px;" width="20" height="22" viewBox="0 0 20 22"><path d="M1.5 17.5 L3.5 14 V9 Q3.5 3.5 9 3.5 Q14.5 3.5 14.5 9 V14 L16.5 17.5Z" fill="#fff"/><path d="M6.5 18.5 Q9 22 11.5 18.5Z" fill="#fff"/><path d="M5.5 9.5 H10 L5.5 14.5 H10.5" stroke="#000" stroke-width="1.4" fill="none"/><path d="M12.5 2 H17.5 L12.5 7.5 H18" stroke="#fff" stroke-width="1.6" fill="none"/></svg>
<div class="a" style="left:0px;top:1074px;width:1885px;height:31px;background:#fff"></div>
<div class="a" style="left:0px;top:0px;width:18px;height:1105px;background:#fff"></div>
<div class="a" style="left:1861px;top:0px;width:24px;height:1105px;background:#fff"></div>
<div class="a" style="left:0px;top:0px;width:1885px;height:37px;background:#fff"></div>
</body></html>
